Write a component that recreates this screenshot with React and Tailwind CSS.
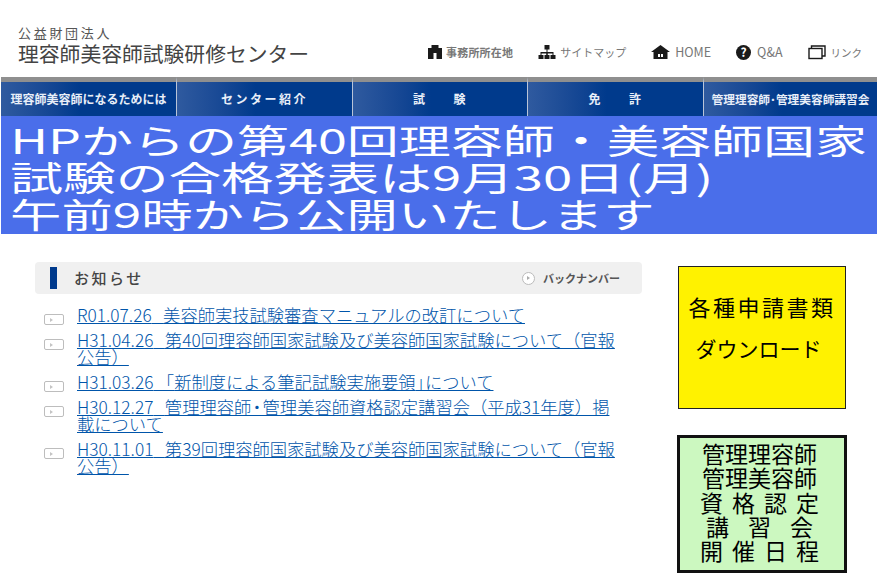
const jp = { fontFamily: '"Noto Sans CJK JP", "Liberation Sans", sans-serif' };

const navItems = [
  { label: '理容師美容師になるためには', cls: 'w-[176px] text-[12px] font-bold', line: true },
  { label: 'センター紹介', cls: 'w-[176px] text-[12px] font-bold tracking-[2.5px]', line: true },
  { label: '試　　験', cls: 'w-[175px] text-[12px] font-bold tracking-[1.500px]', line: true },
  { label: '免　　許', cls: 'w-[176px] text-[12px] font-bold tracking-[1.500px]', line: true },
  { label: '管理理容師･管理美容師講習会', cls: 'flex-1 text-[11.700px] font-bold', line: false },
];

const news = [
  { id: 1, date: 'R01.07.26', body: '美容師実技試験審査マニュアルの改訂について' },
  { id: 2, date: 'H31.04.26', body: '第40回理容師国家試験及び美容師国家試験について（官報公告）' },
  {
    id: 3,
    date: 'H31.03.26',
    body: (
      <>
        <span className="-ml-[8px]">「</span>新制度による筆記試験実施要領<span className="-mr-[8px]">」</span>について
      </>
    ),
  },
  {
    id: 4,
    date: 'H30.12.27',
    body: (
      <>
        管理理容師<span className="-mx-[3px]">・</span>管理美容師資格認定講習会（平成31年度）掲載について
      </>
    ),
  },
  { id: 5, date: 'H30.11.01', body: '第39回理容師国家試験及び美容師国家試験について（官報公告）' },
];

const heroLines = [
  { text: 'HPからの第40回理容師・美容師国家', cls: 'scale-x-[1.53]' },
  { text: '試験の合格発表は9月30日(月)', cls: 'scale-x-[1.55]' },
  { text: '午前9時から公開いたします', cls: 'scale-x-[1.51]' },
];

function OfficeIcon() {
  return (
    <svg width="16" height="16" viewBox="0 0 16 16" className="fill-[#1a1a1a]">
      <path fillRule="evenodd" d="M1 4h3.500V1h7v3H15v11H1zM6.500 9v6h3V9z" />
    </svg>
  );
}

function SitemapIcon() {
  return (
    <svg width="18" height="16" viewBox="0 0 18 16" className="fill-[#1a1a1a]">
      <path d="M6.500 1h5v4.500h-2V8h6v3h2v4h-5v-4h2V9.500H9.750V11h1.750v4h-5v-4h1.750V9.500H3.500V11h2v4h-5v-4h2V8h6V5.500h-2z" />
    </svg>
  );
}

function HomeIcon() {
  return (
    <svg width="19" height="16" viewBox="0 0 19 16" className="fill-[#1a1a1a]">
      <path fillRule="evenodd" d="M9.500 1 19 8H16.500v7h-14V8H0zM7 10v3h2v-3zM10 10v3h2v-3z" />
    </svg>
  );
}

function QuestionIcon() {
  return (
    <div className="flex h-[15px] w-[15px] items-center justify-center rounded-full bg-[#1a1a1a] text-[12px] leading-none font-bold text-white">
      ?
    </div>
  );
}

function LinkIcon() {
  return (
    <svg width="18" height="15" viewBox="0 0 18 15" fill="none" stroke="#1a1a1a" strokeWidth="1.400">
      <rect x="1" y="3.500" width="13" height="10" />
      <path d="M3.500 3.500V1H17v10h-3" />
    </svg>
  );
}

function TopLink({ icon, label, cls }) {
  return (
    <div className={`flex items-center ${cls}`}>
      {icon}
      <span className="text-[#777]">{label}</span>
    </div>
  );
}

function ArrowBox() {
  return (
    <div className="mt-[8px] -mb-[4px] flex h-[11px] w-[20px] shrink-0 items-center rounded-[2px] border-[1.500px] border-[#bdbdbd] pl-[5px]">
      <div className="h-0 w-0 border-y-[2px] border-l-[3px] border-y-transparent border-l-[#c4c4c4]" />
    </div>
  );
}

export default function App() {
  return (
    <div className="h-[577px] w-[877px] overflow-hidden bg-white" style={jp}>
      <header className="flex h-[77px] items-start justify-between">
        <div className="pt-[25px] pl-[18px] text-[#555]">
          <div className="text-[13px] leading-[15px] tracking-[2.700px]">公益財団法人</div>
          <div className="text-[20.800px] leading-[26px] text-[#444]">理容師美容師試験研修センター</div>
        </div>
        <div className="flex items-center gap-[25px] pt-[43px] pr-[15px]">
          <TopLink icon={<OfficeIcon />} label="事務所所在地" cls="gap-[3px] text-[11px] font-bold tracking-[0.2px]" />
          <TopLink icon={<SitemapIcon />} label="サイトマップ" cls="gap-[4px] text-[11px]" />
          <TopLink icon={<HomeIcon />} label="HOME" cls="gap-[5px] text-[12.500px]" />
          <TopLink icon={<QuestionIcon />} label="Q&A" cls="gap-[6px] text-[12.500px]" />
          <TopLink icon={<LinkIcon />} label="リンク" cls="gap-[5px] text-[10.500px]" />
        </div>
      </header>

      <nav className="ml-[1px] flex h-[39px] bg-[#003a8c]">
        {navItems.map(item => (
          <div
            key={item.label}
            className={`flex items-center justify-center border-t-[5px] border-t-[#8f8f8f] bg-gradient-to-r from-[#2f5a9f] to-[#003a8c] to-[45%] text-[#e8eef8] ${item.line ? 'border-r border-r-[#b9c4d8]' : ''} ${item.cls}`}
          >
            {item.label}
          </div>
        ))}
      </nav>

      <section className="ml-[1px] h-[118px] bg-[#4a6eea] pt-[5px] text-white">
        {heroLines.map(line => (
          <div key={line.text} className={`h-[37px] origin-left pl-[6px] text-[34px] leading-[37px] whitespace-nowrap ${line.cls}`}>
            {line.text}
          </div>
        ))}
      </section>

      <div className="flex pt-[28px]">
        <main className="w-[642px] shrink-0 pl-[35px]">
          <div className="flex h-[32px] items-center justify-between rounded-[4px] bg-[#f0f0f0] pr-[22px] pl-[15px]">
            <div className="flex items-center gap-[17px]">
              <div className="h-[22px] w-[7px] bg-[#003a8c]" />
              <span className="text-[15px] font-medium tracking-[2.500px] text-[#444]">お知らせ</span>
            </div>
            <div className="flex items-center gap-[8px]">
              <div className="flex h-[13px] w-[13px] items-center justify-center rounded-full border border-[#bbb] bg-white">
                <div className="h-0 w-0 border-y-[2px] border-l-[3px] border-y-transparent border-l-[#aaa]" />
              </div>
              <span className="text-[11px] font-bold text-[#555]">バックナンバー</span>
            </div>
          </div>
          <ul className="flex flex-col gap-[8px] pt-[12px] pl-[9px]">
            {news.map(item => (
              <li key={item.id} className="flex gap-[13px]">
                <ArrowBox />
                <a href="#" className="w-[545px] text-[17.300px] leading-[17px] font-light text-[#0055aa] underline">
                  {item.date}{'\u00a0\u00a0\u00a0'}{item.body}
                </a>
              </li>
            ))}
          </ul>
        </main>

        <aside className="flex flex-col items-start gap-[26px] pt-[4px] pl-[36px]">
          <div className="flex h-[143px] w-[168px] flex-col items-center gap-[10px] border border-[#222] bg-[#fff200] pt-[23px] leading-[32px] text-black">
            <div className="text-[22px] tracking-[2.500px] whitespace-nowrap">各種申請書類</div>
            <div className="pr-[7px] text-[21px] whitespace-nowrap">ダウンロード</div>
          </div>
          <div className="-ml-[1px] flex h-[138px] w-[170px] flex-col items-center border-[3px] border-[#111] bg-[#ccf8c0] pt-[3px] pr-[5px] text-[23px] leading-[24.300px] text-black">
            <div>管理理容師</div>
            <div>管理美容師</div>
            <div className="-mr-[9px] tracking-[9px]">資格認定</div>
            <div className="-mr-[19px] tracking-[19px]">講習会</div>
            <div className="-mr-[9px] tracking-[9px]">開催日程</div>
          </div>
        </aside>
      </div>
    </div>
  );
}
